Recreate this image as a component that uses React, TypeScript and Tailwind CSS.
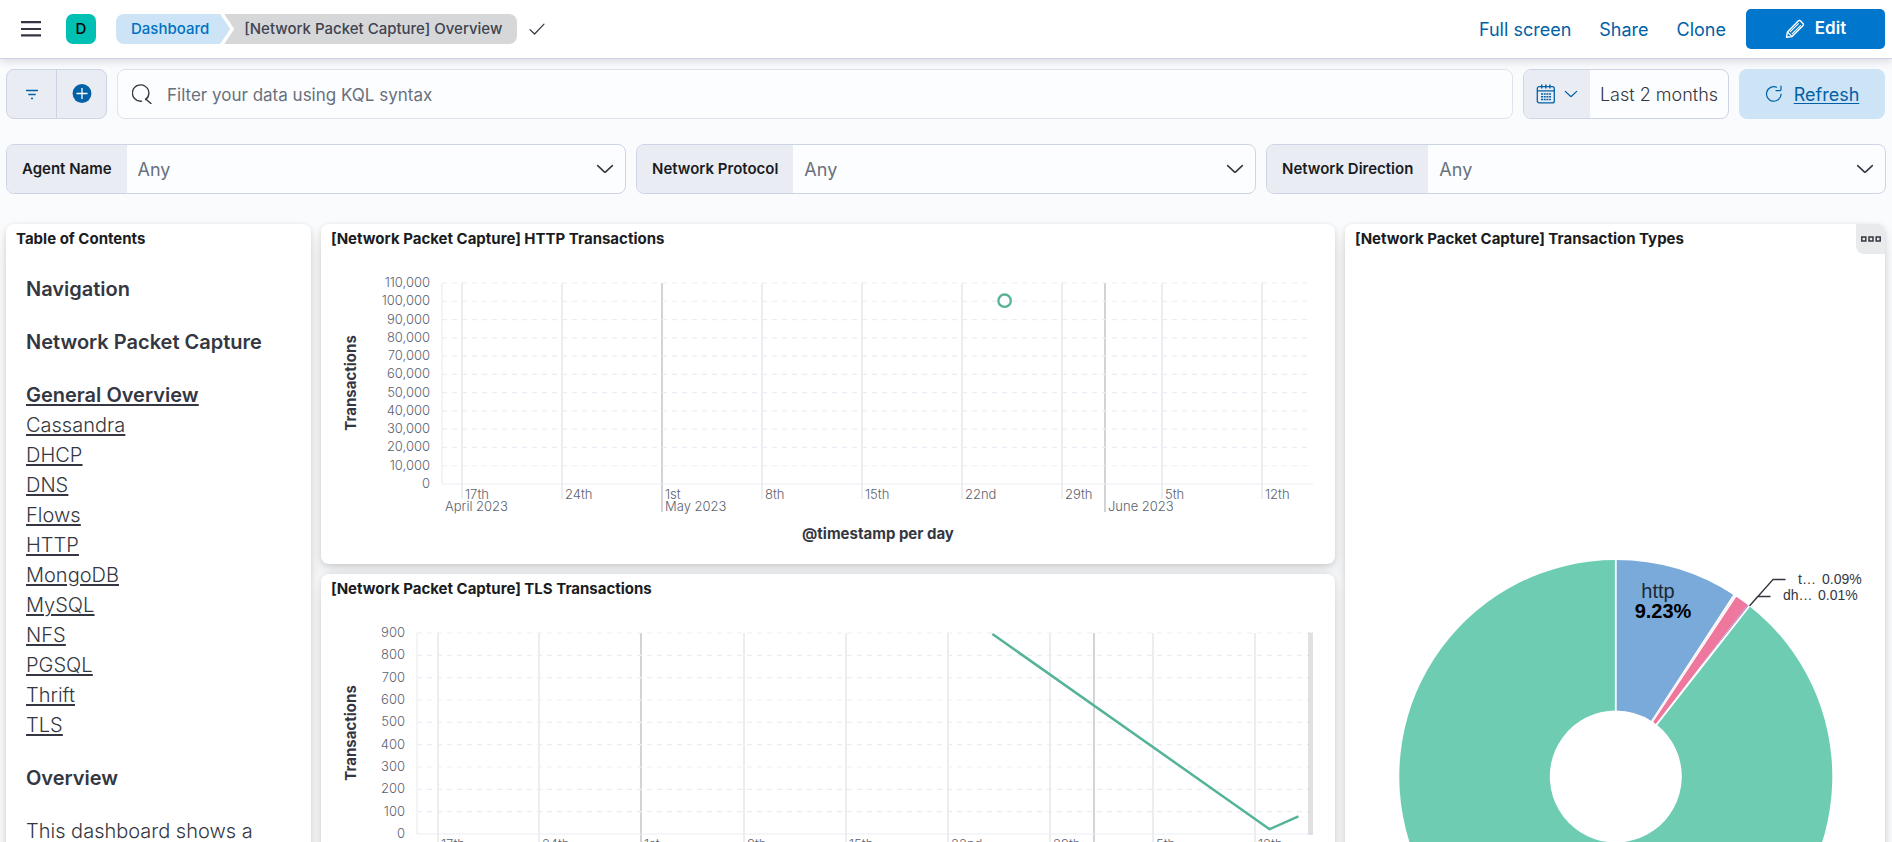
import React from "react";

const pageFont = "font-[Inter,sans-serif]";

const tocLinks = ["Cassandra", "DHCP", "DNS", "Flows", "HTTP", "MongoDB", "MySQL", "NFS", "PGSQL", "Thrift", "TLS"];

const controls = [
  { id: "agent-name", label: "Agent Name" },
  { id: "network-protocol", label: "Network Protocol" },
  { id: "network-direction", label: "Network Direction" },
];

function ChevronDown({ className }: { className: string }) {
  return (
    <svg className={className} viewBox="0 0 16 16" fill="none" stroke="currentColor" aria-hidden="true">
      <path d="M1.5 5 L7.4 10.6 a0.9 0.9 0 0 0 1.2 0 L14.5 5" strokeWidth="1.4" strokeLinecap="round" />
    </svg>
  );
}

function Header() {
  return (
    <header className="relative z-10 flex h-[59px] shrink-0 items-center border-b border-[#cdd3e4] bg-white pl-[21px] pr-[7px] shadow-[0_3px_8px_rgba(60,70,100,0.16)]">
      <button type="button" aria-label="Toggle primary navigation" className="text-[#343741]">
        <svg className="h-5 w-5" viewBox="0 0 20 20" fill="currentColor" aria-hidden="true">
          <path d="M0 2h20v2.2H0zM0 8.9h20v2.2H0zM0 15.2h20v2.2H0z" />
        </svg>
      </button>
      <span className="ml-[25px] flex h-[30px] w-[30px] items-center justify-center rounded-[7px] bg-[#00bfb3] text-[15px] font-medium text-black">
        D
      </span>
      <nav aria-label="Breadcrumb" className="ml-5 flex h-[30px] items-center text-[15px] font-medium">
        <a
          href="#dashboards"
          className="flex h-[30px] items-center rounded-l-lg bg-[#cce4f5] pl-[15px] pr-[21px] text-[#0071c2] [clip-path:polygon(0_0,calc(100%_-_10px)_0,100%_50%,calc(100%_-_10px)_100%,0_100%)]"
        >
          Dashboard
        </a>
        <span className="-ml-[6px] flex h-[30px] items-center rounded-r-lg bg-[#d6d7d9] pl-[20px] pr-[15px] text-[#404350] [clip-path:polygon(0_0,100%_0,100%_100%,0_100%,10px_50%)]">
          [Network Packet Capture] Overview
        </span>
      </nav>
      <svg className="ml-3 h-4 w-4 text-[#343741]" viewBox="0 0 16 16" fill="none" stroke="currentColor" aria-hidden="true">
        <path d="M1 8.6 L5.6 13 L15 3.2" strokeWidth="1.2" strokeLinecap="round" strokeLinejoin="round" />
      </svg>
      <div className="ml-auto flex items-center text-[18px] text-[#0061a6]">
        <button type="button" className="mr-7">Full screen</button>
        <button type="button" className="mr-7">Share</button>
        <button type="button" className="mr-5">Clone</button>
        <button
          type="button"
          className="flex h-10 w-[139px] items-center justify-center gap-[10px] rounded-[5px] bg-[#0077cc] text-[17px] font-semibold text-white"
        >
          <svg className="h-5 w-5" viewBox="0 0 20 20" fill="none" stroke="currentColor" aria-hidden="true">
            <path d="M1.5 18.3 L2.4 12.9 L13.2 2.1 a1.7 1.7 0 0 1 2.4 0 L17.9 4.4 a1.7 1.7 0 0 1 0 2.4 L7.1 17.6 Z" strokeWidth="1.4" strokeLinejoin="round" />
            <path d="M4.8 13.2 L13.6 4.4 M6.9 15.2 L15.8 6.3 M2.4 13 l4.6 4.6" strokeWidth="1.2" />
          </svg>
          Edit
        </button>
      </div>
    </header>
  );
}

function QueryBar() {
  return (
    <div className="flex h-[50px] gap-[10px]">
      <div className="flex w-[101px] shrink-0 overflow-hidden rounded-lg border border-[#ccd4e5] bg-[#e9ecf3] text-[#0061a6]">
        <button type="button" aria-label="Saved queries" className="flex flex-1 items-center justify-center border-r border-[#ccd4e5]">
          <svg className="h-4 w-4" viewBox="0 0 16 16" fill="none" stroke="currentColor" aria-hidden="true">
            <path d="M2 4.5h12M4.3 8.5h7.4M6.9 12.5h2.2" strokeWidth="1.4" />
          </svg>
        </button>
        <button type="button" aria-label="Add filter" className="flex flex-1 items-center justify-center">
          <svg className="h-5 w-5" viewBox="0 0 20 20" aria-hidden="true">
            <circle cx="10" cy="9.5" r="9.4" fill="currentColor" />
            <path d="M10 4v11M4.5 9.5h11" stroke="white" strokeWidth="1.3" />
          </svg>
        </button>
      </div>
      <label className="flex min-w-0 flex-1 items-center gap-[15px] rounded-lg border border-[#dfe3ee] bg-[#fcfdfe] px-[14px]">
        <svg className="h-5 w-5 shrink-0 text-[#343741]" viewBox="0 0 20 20" fill="none" stroke="currentColor" aria-hidden="true">
          <path d="M9.6 17.2 A8.2 8.2 0 1 1 13.6 15.6 M13.6 15 L19 19.6" strokeWidth="1.3" strokeLinecap="round" />
        </svg>
        <input
          type="text"
          aria-label="Filter your data"
          placeholder="Filter your data using KQL syntax"
          className="w-full bg-transparent pt-px text-[17px] leading-6 text-[#343741] outline-none placeholder:text-[#69707d]"
        />
      </label>
      <div className="flex w-[206px] shrink-0 overflow-hidden rounded-lg border border-[#ccd4e5] bg-[#fcfdfe]">
        <button type="button" aria-label="Date quick select" className="flex w-[66px] items-center justify-center gap-2 bg-[#e9ecf3] pr-px text-[#0061a6]">
          <svg className="h-5 w-5" viewBox="0 0 20 20" fill="none" stroke="currentColor" aria-hidden="true">
            <rect x="1.3" y="2.7" width="17" height="16.2" rx="2" strokeWidth="1.3" />
            <path d="M1.3 6.8h17" strokeWidth="1.3" />
            <path d="M5.7 0.5v4M9.8 0.5v4M13.9 0.5v4" strokeWidth="1.4" />
            <path d="M5 10h10M5 12.8h10M5 15.6h10" strokeWidth="1.5" strokeDasharray="2 0.7" />
          </svg>
          <ChevronDown className="h-[14px] w-[14px]" />
        </button>
        <button type="button" className="flex-1 whitespace-nowrap text-[18px] font-light text-[#343741]">Last 2 months</button>
      </div>
      <button type="button" className="flex w-[146px] shrink-0 items-center justify-center gap-[11px] rounded-lg bg-[#cce4f5] text-[18px] text-[#0061a6]">
        <svg className="h-[18px] w-[18px]" viewBox="0 0 18 18" fill="none" stroke="currentColor" aria-hidden="true">
          <path d="M11.6 2.2 A7.3 7.3 0 1 0 16.1 9.2" strokeWidth="1.2" strokeLinecap="round" />
          <path d="M11 5.6h4a1 1 0 0 0 1-1V1" strokeWidth="1.2" strokeLinecap="round" />
        </svg>
        <span className="underline underline-offset-2">Refresh</span>
      </button>
    </div>
  );
}

function ControlRow() {
  return (
    <div className="-mr-px mt-[25px] grid grid-cols-3 gap-[10px]">
      {controls.map((c) => (
        <div key={c.id} className="flex h-[50px] overflow-hidden rounded-lg border border-[#ccd4e5] bg-[#fcfdfe]">
          <label htmlFor={c.id} className="flex items-center whitespace-nowrap bg-[#e9ecf3] px-[15px] text-[15px] font-semibold text-[#1a1c21]">
            {c.label}
          </label>
          <div className="grid flex-1 items-center">
            <select
              id={c.id}
              className="col-start-1 row-start-1 h-full w-full appearance-none bg-transparent pl-[11px] text-[18px] text-[#69707d] outline-none"
            >
              <option>Any</option>
            </select>
            <ChevronDown className="pointer-events-none col-start-1 row-start-1 mr-[11px] h-[18px] w-[18px] justify-self-end text-[#343741]" />
          </div>
        </div>
      ))}
    </div>
  );
}

function Panel({ title, menu, className, children }: { title: string; menu?: boolean; className: string; children: React.ReactNode }) {
  return (
    <section className={`overflow-hidden rounded-lg bg-white shadow-[0_1px_5px_rgba(0,0,0,0.08),0_3px_10px_rgba(0,0,0,0.06),0_7px_15px_rgba(0,0,0,0.05),0_19px_19px_rgba(0,0,0,0.04)] ${className}`}>
      <div className="flex h-[30px] items-center justify-between pl-[10px]">
        <h2 className="text-[15px] font-bold text-[#1a1c21]">{title}</h2>
        {menu && (
          <button type="button" aria-label="Panel options" className="flex h-[30px] w-[29px] items-center justify-center rounded-bl-lg bg-[#e9eaeb] text-[#343741]">
            <svg className="h-5 w-5" viewBox="0 0 20 20" fill="none" stroke="currentColor" strokeWidth="1.5" aria-hidden="true">
              <path d="M0.8 8h4v4h-4zM8 8h4v4h-4zM15.2 8h4v4h-4z" />
            </svg>
          </button>
        )}
      </div>
      {children}
    </section>
  );
}

type Tick = { x: number; label?: string; month?: string };

type ChartProps = {
  name: string;
  left: number;
  yLabels: string[];
  ticks: Tick[];
  firstMonth: string;
  children: React.ReactNode;
};

const plotTop = 29;
const plotBottom = 230;
const plotRight = 992;

function TimeChart({ name, left, yLabels, ticks, firstMonth, children }: ChartProps) {
  const step = (plotBottom - plotTop) / (yLabels.length - 1);
  return (
    <svg className="block h-auto w-full" viewBox="0 0 1014 310" role="img" aria-label={name}>
      <g strokeWidth="1.5">
        {ticks.map((t) => (
          <line key={t.x} x1={t.x} x2={t.x} y1={plotTop} y2={t.month ? plotBottom + 28 : plotBottom + 15} stroke={t.month ? "#c4c5c8" : "#e6e7e9"} />
        ))}
      </g>
      <g stroke="#eaedf3">
        <line x1={left} x2={left} y1={plotTop} y2={plotBottom} strokeWidth="1.2" />
        {yLabels.map((l, i) => (
          <line
            key={l}
            x1={left}
            x2={i === yLabels.length - 1 ? plotRight : plotRight - 4}
            y1={plotTop + i * step}
            y2={plotTop + i * step}
            strokeWidth="1.2"
            strokeDasharray={i === yLabels.length - 1 ? undefined : "5 5"}
          />
        ))}
      </g>
      <g fill="#5c626f" fontSize="13" fontWeight="300">
        {yLabels.map((l, i) => (
          <text key={l} x={left - 12} y={plotTop + i * step + 4} textAnchor="end">
            {l}
          </text>
        ))}
        {ticks.map((t) => (
          <React.Fragment key={t.x}>
            {t.label && <text x={t.x + 3} y={plotBottom + 15}>{t.label}</text>}
            {t.month && <text x={t.x + 3} y={plotBottom + 27}>{t.month}</text>}
          </React.Fragment>
        ))}
        <text x={left + 3} y={plotBottom + 27}>{firstMonth}</text>
      </g>
      <g fill="#343741" fontSize="15" fontWeight="700" textAnchor="middle">
        <text transform="translate(35 129) rotate(-90)">Transactions</text>
        <text x="557" y="285">@timestamp per day</text>
      </g>
      {children}
    </svg>
  );
}

const httpTicks: Tick[] = [
  { x: 141, label: "17th" },
  { x: 241, label: "24th" },
  { x: 341, label: "1st", month: "May 2023" },
  { x: 441, label: "8th" },
  { x: 541, label: "15th" },
  { x: 641, label: "22nd" },
  { x: 741, label: "29th" },
  { x: 784, month: "June 2023" },
  { x: 841, label: "5th" },
  { x: 941, label: "12th" },
];

const tlsTicks: Tick[] = [
  { x: 117, label: "17th" },
  { x: 218, label: "24th" },
  { x: 320, label: "1st", month: "May 2023" },
  { x: 423, label: "8th" },
  { x: 525, label: "15th" },
  { x: 627, label: "22nd" },
  { x: 729, label: "29th" },
  { x: 773, month: "June 2023" },
  { x: 832, label: "5th" },
  { x: 934, label: "12th" },
];

const httpLabels = ["110,000", "100,000", "90,000", "80,000", "70,000", "60,000", "50,000", "40,000", "30,000", "20,000", "10,000", "0"];
const tlsLabels = ["900", "800", "700", "600", "500", "400", "300", "200", "100", "0"];

const CX = 270.8;
const CY = 522.5;
const OUTER = 216.5;
const INNER = 66;

function point(r: number, deg: number) {
  const a = (deg * Math.PI) / 180;
  return `${(CX + r * Math.sin(a)).toFixed(2)} ${(CY - r * Math.cos(a)).toFixed(2)}`;
}

function slice(from: number, to: number) {
  const large = to - from > 180 ? 1 : 0;
  return `M${point(INNER, from)} L${point(OUTER, from)} A${OUTER} ${OUTER} 0 ${large} 1 ${point(OUTER, to)} L${point(INNER, to)} A${INNER} ${INNER} 0 ${large} 0 ${point(INNER, from)} Z`;
}

function TransactionTypes() {
  return (
    <svg className="block h-auto w-full" viewBox="0 0 540 660" role="img" aria-label="Transaction types">
      <path d={slice(38.1, 360)} fill="#6dccb1" />
      <path d={slice(0, 33.1)} fill="#79aad9" />
      <path d={slice(33.6, 37.5)} fill="#ee789d" />
      <path d={`M${point(INNER + 60, 37.7)} L${point(OUTER, 37.5)} L${point(OUTER, 38)} Z`} fill="#b58bd0" />
      <path
        d={`M${point(INNER - 2, 0)} L${point(OUTER + 2, 0)} M${point(INNER - 2, 33.1)} L${point(OUTER + 2, 33.1)} M${point(INNER - 2, 33.6)} L${point(OUTER + 2, 33.6)} M${point(INNER - 2, 38.1)} L${point(OUTER + 2, 38.1)}`}
        stroke="white"
        strokeWidth="1.8"
      />
      <path d={`M${point(INNER, 33.4)} L${point(OUTER, 33.4)}`} stroke="#f7dfe8" strokeWidth="0.8" />
      <path d="M404.5 352 L428 325.5 H440.5 M404.5 352 L412.7 342.5 H425.5" fill="none" stroke="#343741" strokeWidth="1.3" />
      <g className="font-[Liberation_Sans,Arial,sans-serif]" fill="#343741" fontSize="14">
        <text x="453" y="330">t…</text>
        <text x="477" y="330">0.09%</text>
        <text x="438" y="346">dh…</text>
        <text x="473" y="346">0.01%</text>
      </g>
      <g className="font-[Liberation_Sans,Arial,sans-serif]" fontSize="20" textAnchor="middle">
        <text x="313" y="344" fill="#1c2733">http</text>
        <text x="318" y="364" fill="#000000" fontWeight="700">9.23%</text>
      </g>
    </svg>
  );
}

export default function App() {
  return (
    <div className={`flex h-screen flex-col bg-[#fafbfd] text-[#343741] ${pageFont}`}>
      <Header />
      <main className="flex-1 overflow-y-auto pb-[10px] pl-[6px] pr-[7px] pt-[10px] [scrollbar-width:none]">
        <QueryBar />
        <ControlRow />
        <div className="mt-[30px] grid grid-cols-[305fr_1014fr_540fr] grid-rows-[auto_auto] gap-[10px]">
          <Panel title="Table of Contents" className="row-span-2">
            <div className="flex flex-col gap-[23px] px-5 pt-5 text-[20px] leading-[30px]">
              <h3 className="font-semibold">Navigation</h3>
              <h3 className="font-semibold">Network Packet Capture</h3>
              <nav aria-label="Network Packet Capture dashboards" className="flex flex-col items-start underline underline-offset-2">
                <a href="#general" className="font-semibold">General Overview</a>
                {tocLinks.map((l) => (
                  <a key={l} href={`#${l.toLowerCase()}`} className="font-light">
                    {l}
                  </a>
                ))}
              </nav>
              <h3 className="font-semibold">Overview</h3>
              <p className="font-light">This dashboard shows a</p>
            </div>
          </Panel>
          <Panel title="[Network Packet Capture] HTTP Transactions" className="">
            <TimeChart name="HTTP transactions per day" left={121} yLabels={httpLabels} ticks={httpTicks} firstMonth="April 2023">
              <circle cx="683.6" cy="46.7" r="6.2" fill="white" stroke="#54b399" strokeWidth="2.3" />
            </TimeChart>
          </Panel>
          <Panel title="[Network Packet Capture] Transaction Types" menu className="row-span-2">
            <TransactionTypes />
          </Panel>
          <Panel title="[Network Packet Capture] TLS Transactions" className="">
            <TimeChart name="TLS transactions per day" left={96} yLabels={tlsLabels} ticks={tlsTicks} firstMonth="April 2023">
              <rect x="987" y="28.5" width="5" height="202" fill="#343741" opacity="0.15" />
              <path d="M671.4 30 L948.6 225.2 L977.4 212.3" fill="none" stroke="#54b399" strokeWidth="2.5" strokeLinejoin="round" />
            </TimeChart>
          </Panel>
        </div>
      </main>
    </div>
  );
}
